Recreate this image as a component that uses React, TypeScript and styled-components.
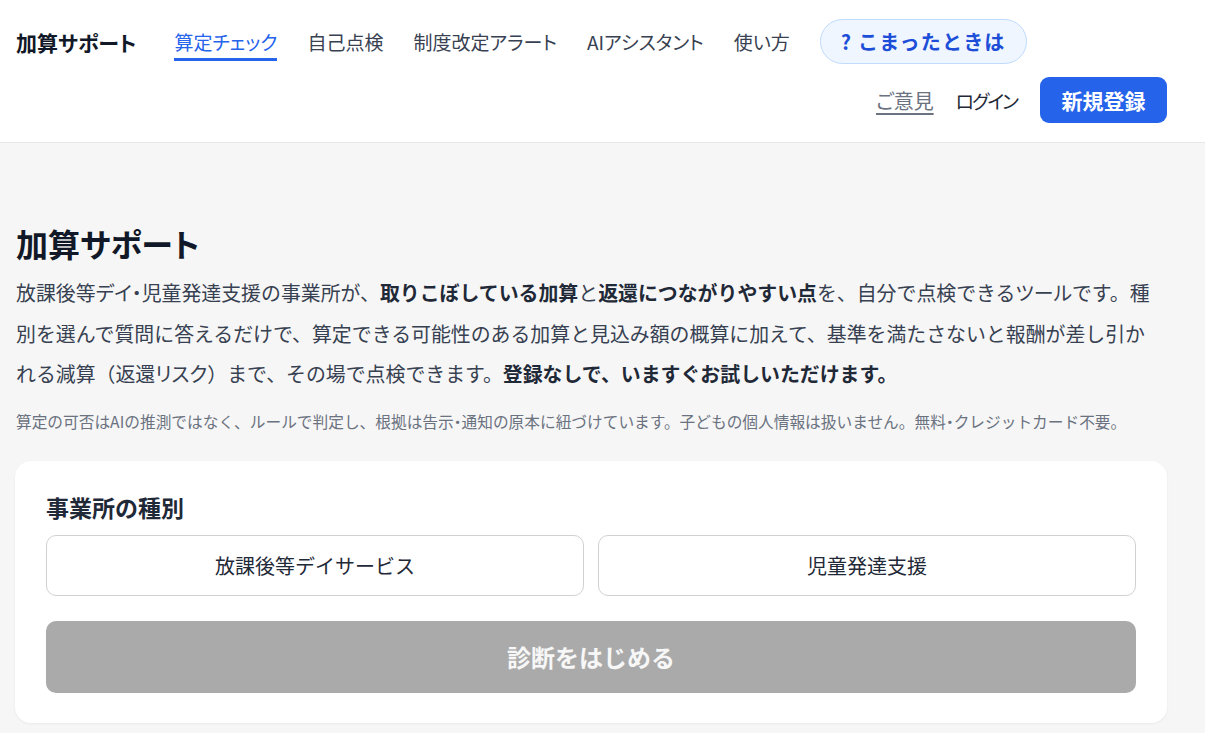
import React from "react";
import styled, { createGlobalStyle } from "styled-components";

const GlobalStyle = createGlobalStyle`
  html, body { margin: 0; padding: 0; }
  body {
    background: #f6f6f6;
    font-family: "Noto Sans CJK JP", "Noto Sans", sans-serif;
    color: #1f2937;
  }
  * { box-sizing: border-box; }
`;

const Header = styled.header`
  background: #ffffff;
  border-bottom: 1px solid #e5e7eb;
  padding: 19px 38px 19px 16px;
  display: flex;
  flex-wrap: wrap;
  align-items: center;
  row-gap: 13px;
`;

const Logo = styled.div`
  font-size: 21px;
  font-weight: 700;
  color: #111827;
  margin-right: 38px;
  white-space: nowrap;
  font-feature-settings: "palt";
`;

const Nav = styled.nav`
  display: flex;
  align-items: center;
  gap: 30px;
`;

const NavLink = styled.a<{ $active?: boolean }>`
  position: relative;
  font-size: 19px;
  font-feature-settings: "palt";
  color: ${(p) => (p.$active ? "#2563eb" : "#374151")};
  text-decoration: none;
  white-space: nowrap;
  line-height: 28px;
  &::after {
    content: "";
    display: ${(p) => (p.$active ? "block" : "none")};
    position: absolute;
    left: 0;
    right: 0;
    bottom: -5px;
    height: 3px;
    background: #2563eb;
  }
`;

const HelpPill = styled.button`
  height: 45px;
  padding: 0 20px;
  border-radius: 999px;
  border: 1.5px solid #bfdbfe;
  background: #eff6ff;
  color: #1d4ed8;
  font-family: inherit;
  font-size: 20px;
  font-weight: 700;
  letter-spacing: 1.2px;
  white-space: nowrap;
`;

const Actions = styled.div`
  margin-left: auto;
  display: flex;
  align-items: center;
  gap: 22px;
`;

const TextLink = styled.a<{ $underline?: boolean }>`
  font-size: ${(p) => (p.$underline ? "20px" : "19px")};
  font-feature-settings: "palt";
  letter-spacing: ${(p) => (p.$underline ? "0" : "-2px")};
  color: ${(p) => (p.$underline ? "#6b7280" : "#1f2937")};
  text-decoration: ${(p) => (p.$underline ? "underline" : "none")};
  text-underline-offset: 4px;
  white-space: nowrap;
`;

const PrimaryButton = styled.button`
  width: 127px;
  height: 46px;
  margin-left: 1px;
  border: none;
  border-radius: 9px;
  background: #2563eb;
  color: #ffffff;
  font-family: inherit;
  font-size: 21px;
  font-weight: 700;
`;

const Main = styled.main`
  padding: 79px 38px 40px 15px;
`;

const Title = styled.h1`
  margin: 0 0 0 1px;
  font-size: 32px;
  line-height: 42px;
  font-weight: 700;
  color: #111827;
  font-feature-settings: "palt";
`;

const Lead = styled.p`
  margin: 9px 0 0 1px;
  padding-right: 13px;
  font-size: 19.9px;
  line-height: 40.5px;
  color: #374151;
  strong {
    font-weight: 700;
    color: #1f2937;
  }
`;

const Kana = styled.span`
  font-feature-settings: "palt";
`;

const Note = styled.p`
  margin: 15px 0 0 1px;
  font-size: 15.7px;
  line-height: 24px;
  color: #6b7280;
`;

const Card = styled.section`
  margin-top: 27px;
  background: #ffffff;
  border-radius: 16px;
  box-shadow: 0 1px 3px rgba(0, 0, 0, 0.05);
  padding: 31px 31px 30px;
`;

const Label = styled.div`
  font-size: 23px;
  line-height: 30px;
  font-weight: 600;
  color: #1f2937;
`;

const OptionGrid = styled.div`
  margin-top: 13px;
  display: grid;
  grid-template-columns: 1fr 1fr;
  gap: 14px;
`;

const Option = styled.button`
  height: 61px;
  background: #ffffff;
  border: 1.5px solid #d1d1d1;
  border-radius: 10px;
  font-family: inherit;
  font-size: 20px;
  color: #1f2937;
`;

const StartButton = styled.button`
  margin-top: 25px;
  width: 100%;
  height: 72px;
  border: none;
  border-radius: 10px;
  background: #aaaaaa;
  color: #f7f7f7;
  font-family: inherit;
  font-size: 24px;
  font-weight: 700;
`;

export default function App() {
  return (
    <>
      <GlobalStyle />
      <Header>
        <Logo>加算サポート</Logo>
        <Nav>
          <NavLink $active>算定チェック</NavLink>
          <NavLink>自己点検</NavLink>
          <NavLink>制度改定アラート</NavLink>
          <NavLink>AIアシスタント</NavLink>
          <NavLink>使い方</NavLink>
          <HelpPill>? こまったときは</HelpPill>
        </Nav>
        <Actions>
          <TextLink $underline>ご意見</TextLink>
          <TextLink>ログイン</TextLink>
          <PrimaryButton>新規登録</PrimaryButton>
        </Actions>
      </Header>
      <Main>
        <Title>加算サポート</Title>
        <Lead>
          放課後等<Kana>デイ・</Kana>児童発達支援の事業所が、<strong>取りこぼしている加算</strong>と
          <strong>返還につながりやすい点</strong>
          を、自分で点検できる<Kana>ツール</Kana>です。種別を選んで質問に答えるだけで、算定できる可能性のある加算と見込み額の概算に加えて、基準を満たさないと報酬が差し引かれる減算（返還<Kana>リスク</Kana>）まで、その場で点検できます。
          <strong>登録なしで、いますぐお試しいただけます。</strong>
        </Lead>
        <Note>
          算定の可否はAIの推測ではなく、ルールで判定し、根拠は告示<Kana>・</Kana>通知の原本に紐づけています。子どもの個人情報は扱いません。無料<Kana>・</Kana>クレジットカード不要。
        </Note>
        <Card>
          <Label>事業所の種別</Label>
          <OptionGrid>
            <Option>放課後等デイサービス</Option>
            <Option>児童発達支援</Option>
          </OptionGrid>
          <StartButton>診断をはじめる</StartButton>
        </Card>
      </Main>
    </>
  );
}
